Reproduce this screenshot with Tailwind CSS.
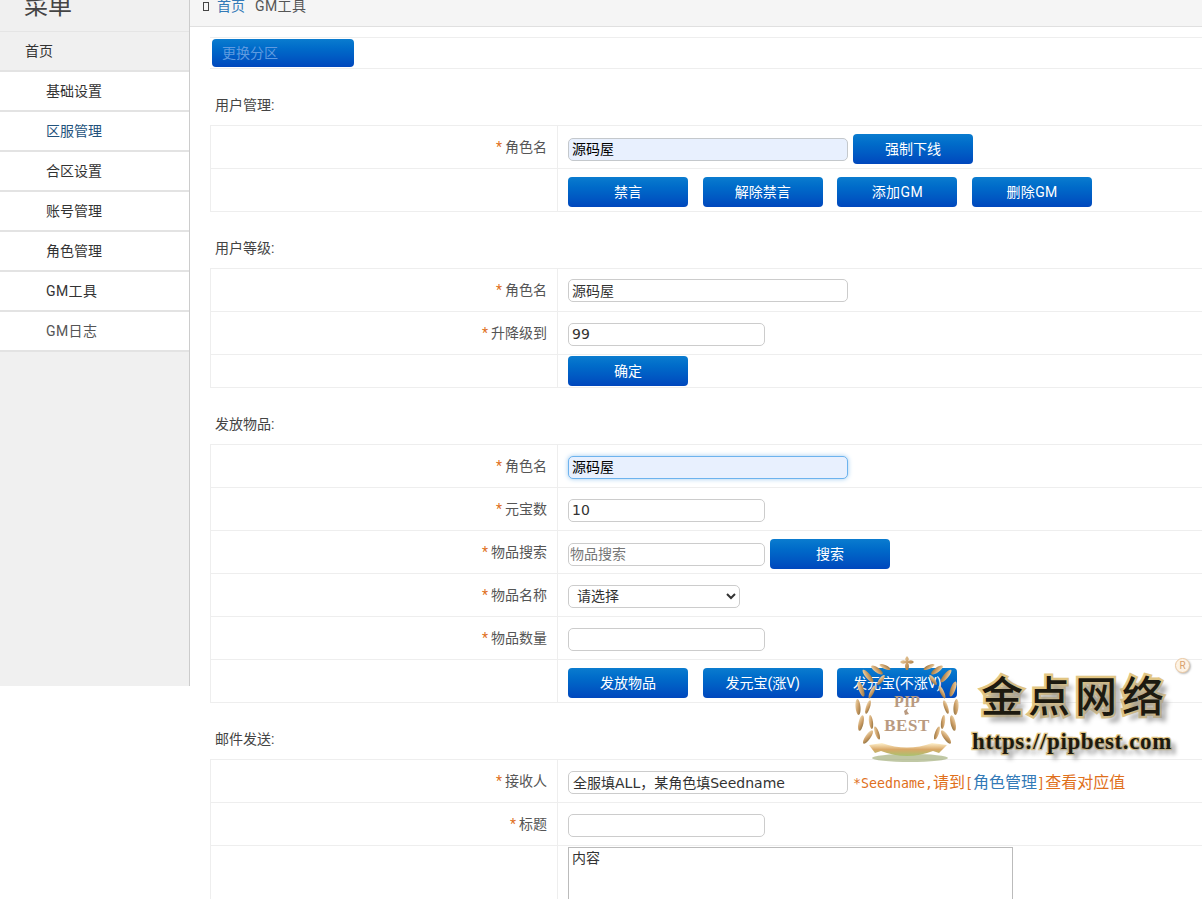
<!DOCTYPE html>
<html lang="zh-CN">
<head>
<meta charset="UTF-8">
<title>GM工具</title>
<script src="https://cdn.jsdelivr.net/npm/@tailwindcss/browser@4"></script>
</head>
<body class="relative h-[899px] overflow-hidden bg-white text-[14px] text-[#333] font-['Roboto','Noto_Sans_CJK_SC',sans-serif]">
<div class="flex items-start">
  <!-- sidebar -->
  <aside class="w-[190px] h-[686px] shrink-0 bg-[#f0f0f0] border-r border-[#ccc]">
    <div class="h-[32px] overflow-hidden border-b border-[#e5e5e5] pl-[24px]">
      <div class="-mt-[11px] text-[24px] leading-[34px] text-[#444]">菜单</div>
    </div>
    <a class="flex items-center h-[40px] pl-[25px] border-b-2 border-[#e3e3e3] text-[#333]">首页</a>
    <a class="flex items-center h-[40px] pl-[46px] bg-white border-b-2 border-[#e3e3e3] text-[#333]">基础设置</a>
    <a class="flex items-center h-[40px] pl-[46px] bg-white border-b-2 border-[#e3e3e3] text-[#23527c]">区服管理</a>
    <a class="flex items-center h-[40px] pl-[46px] bg-white border-b-2 border-[#e3e3e3] text-[#333]">合区设置</a>
    <a class="flex items-center h-[40px] pl-[46px] bg-white border-b-2 border-[#e3e3e3] text-[#333]">账号管理</a>
    <a class="flex items-center h-[40px] pl-[46px] bg-white border-b-2 border-[#e3e3e3] text-[#333]">角色管理</a>
    <a class="flex items-center h-[40px] pl-[46px] bg-white border-b-2 border-[#e3e3e3] text-[#333] tracking-[0.4px]">GM工具</a>
    <a class="flex items-center h-[40px] pl-[46px] bg-white border-b-2 border-[#e3e3e3] text-[#555] tracking-[0.4px]">GM日志</a>
  </aside>

  <!-- main -->
  <main class="flex-1 min-w-0">
    <div class="h-[27px] overflow-hidden bg-[#f5f5f5] border-b border-[#e0e0e0] flex items-start pl-[13px] text-[#555]">
      <span class="mt-[2px] w-[6px] h-[9px] border border-[#444]"></span>
      <a class="ml-[8px] -mt-[4px] leading-[20px] text-[#337ab7]">首页</a>
      <span class="ml-[10px] -mt-[4px] leading-[20px] tracking-[0.4px]">GM工具</span>
    </div>

    <div class="pl-[20px]">
      <div class="mt-[10px] h-[32px] border-y border-[#eee] flex items-center pl-[2px]">
        <button class="w-[142px] h-[28px] pl-[10px] text-left rounded-[4px] bg-gradient-to-b from-[#0b7ccf] to-[#0047bd] text-[#5f9be0]">更换分区</button>
      </div>

      <!-- 用户管理 -->
      <h3 class="h-[56px] pt-[26px] pl-[5px] leading-[20px] font-normal text-[#444]">用户管理:</h3>
      <div class="border-l border-t border-[#eee]">
        <div class="grid grid-cols-[347px_1fr] h-[43px] border-b border-[#eee]">
          <div class="border-r border-[#eee] flex items-center justify-end pr-[10px] text-[#555]"><span class="text-[#e0701c] mr-[3px]">*</span>角色名</div>
          <div class="flex items-center gap-[5px] pl-[10px] pt-[4px]">
            <input value="源码屋" class="w-[280px] h-[23px] px-[3px] pb-[2px] rounded-[5px] border border-[#c4c8cc] bg-[#e8f0fe] text-black font-['DejaVu_Sans','Noto_Sans_CJK_SC',sans-serif]">
            <button class="w-[120px] h-[30px] rounded-[4px] bg-gradient-to-b from-[#0b7ccf] to-[#0047bd] text-white">强制下线</button>
          </div>
        </div>
        <div class="grid grid-cols-[347px_1fr] h-[43px] border-b border-[#eee]">
          <div class="border-r border-[#eee]"></div>
          <div class="flex items-center gap-[14.7px] pl-[10px] pt-[4px]">
            <button class="w-[120px] h-[30px] rounded-[4px] bg-gradient-to-b from-[#0b7ccf] to-[#0047bd] text-white">禁言</button>
            <button class="w-[120px] h-[30px] rounded-[4px] bg-gradient-to-b from-[#0b7ccf] to-[#0047bd] text-white">解除禁言</button>
            <button class="w-[120px] h-[30px] rounded-[4px] bg-gradient-to-b from-[#0b7ccf] to-[#0047bd] text-white tracking-[0.4px]">添加GM</button>
            <button class="w-[120px] h-[30px] rounded-[4px] bg-gradient-to-b from-[#0b7ccf] to-[#0047bd] text-white tracking-[0.4px]">删除GM</button>
          </div>
        </div>
      </div>

      <!-- 用户等级 -->
      <h3 class="h-[56px] pt-[26px] pl-[5px] leading-[20px] font-normal text-[#444]">用户等级:</h3>
      <div class="border-l border-t border-[#eee]">
        <div class="grid grid-cols-[347px_1fr] h-[43px] border-b border-[#eee]">
          <div class="border-r border-[#eee] flex items-center justify-end pr-[10px] text-[#555]"><span class="text-[#e0701c] mr-[3px]">*</span>角色名</div>
          <div class="flex items-center pl-[10px] pt-[1px]">
            <input value="源码屋" class="w-[280px] h-[23px] px-[3px] pb-[2px] rounded-[5px] border border-[#ccc] text-[#333] font-['DejaVu_Sans','Noto_Sans_CJK_SC',sans-serif]">
          </div>
        </div>
        <div class="grid grid-cols-[347px_1fr] h-[43px] border-b border-[#eee]">
          <div class="border-r border-[#eee] flex items-center justify-end pr-[10px] text-[#555]"><span class="text-[#e0701c] mr-[3px]">*</span>升降级到</div>
          <div class="flex items-center pl-[10px] pt-[2px]">
            <input value="99" class="w-[197px] h-[23px] px-[3px] rounded-[5px] border border-[#ccc] text-[#333] font-['DejaVu_Sans','Noto_Sans_CJK_SC',sans-serif]">
          </div>
        </div>
        <div class="grid grid-cols-[347px_1fr] h-[33px] border-b border-[#eee]">
          <div class="border-r border-[#eee]"></div>
          <div class="flex items-center pl-[10px]">
            <button class="w-[120px] h-[30px] rounded-[4px] bg-gradient-to-b from-[#0b7ccf] to-[#0047bd] text-white">确定</button>
          </div>
        </div>
      </div>

      <!-- 发放物品 -->
      <h3 class="h-[56px] pt-[26px] pl-[5px] leading-[20px] font-normal text-[#444]">发放物品:</h3>
      <div class="border-l border-t border-[#eee]">
        <div class="grid grid-cols-[347px_1fr] h-[43px] border-b border-[#eee]">
          <div class="border-r border-[#eee] flex items-center justify-end pr-[10px] text-[#555]"><span class="text-[#e0701c] mr-[3px]">*</span>角色名</div>
          <div class="flex items-center pl-[10px] pt-[2px]">
            <input value="源码屋" class="w-[280px] h-[23px] px-[3px] pb-[2px] rounded-[5px] border border-[#6db3ee] bg-[#e8f0fe] text-black shadow-[0_0_5px_#9ecaef] font-['DejaVu_Sans','Noto_Sans_CJK_SC',sans-serif]">
          </div>
        </div>
        <div class="grid grid-cols-[347px_1fr] h-[43px] border-b border-[#eee]">
          <div class="border-r border-[#eee] flex items-center justify-end pr-[10px] text-[#555]"><span class="text-[#e0701c] mr-[3px]">*</span>元宝数</div>
          <div class="flex items-center pl-[10px] pt-[2px]">
            <input value="10" class="w-[197px] h-[23px] px-[3px] rounded-[5px] border border-[#ccc] text-[#333] font-['DejaVu_Sans','Noto_Sans_CJK_SC',sans-serif]">
          </div>
        </div>
        <div class="grid grid-cols-[347px_1fr] h-[43px] border-b border-[#eee]">
          <div class="border-r border-[#eee] flex items-center justify-end pr-[10px] text-[#555]"><span class="text-[#e0701c] mr-[3px]">*</span>物品搜索</div>
          <div class="flex items-center gap-[5px] pl-[10px] pt-[4px]">
            <input placeholder="物品搜索" class="w-[197px] h-[23px] px-[1px] rounded-[5px] border border-[#ccc] placeholder:text-[#777] font-['DejaVu_Sans','Noto_Sans_CJK_SC',sans-serif]">
            <button class="w-[120px] h-[30px] rounded-[4px] bg-gradient-to-b from-[#0b7ccf] to-[#0047bd] text-white">搜索</button>
          </div>
        </div>
        <div class="grid grid-cols-[347px_1fr] h-[43px] border-b border-[#eee]">
          <div class="border-r border-[#eee] flex items-center justify-end pr-[10px] text-[#555]"><span class="text-[#e0701c] mr-[3px]">*</span>物品名称</div>
          <div class="flex items-center pl-[10px] pt-[2px]">
            <select class="w-[172px] h-[23px] pl-[4px] rounded-[5px] border border-[#ccc] bg-white text-[#333] appearance-auto">
              <option>请选择</option>
            </select>
          </div>
        </div>
        <div class="grid grid-cols-[347px_1fr] h-[43px] border-b border-[#eee]">
          <div class="border-r border-[#eee] flex items-center justify-end pr-[10px] text-[#555]"><span class="text-[#e0701c] mr-[3px]">*</span>物品数量</div>
          <div class="flex items-center pl-[10px] pt-[2px]">
            <input class="w-[197px] h-[23px] px-[3px] rounded-[5px] border border-[#ccc]">
          </div>
        </div>
        <div class="grid grid-cols-[347px_1fr] h-[43px] border-b border-[#eee]">
          <div class="border-r border-[#eee]"></div>
          <div class="flex items-center gap-[14.7px] pl-[10px] pt-[4px]">
            <button class="w-[120px] h-[30px] rounded-[4px] bg-gradient-to-b from-[#0b7ccf] to-[#0047bd] text-white">发放物品</button>
            <button class="w-[120px] h-[30px] rounded-[4px] bg-gradient-to-b from-[#0b7ccf] to-[#0047bd] text-white">发元宝(涨V)</button>
            <button class="w-[120px] h-[30px] rounded-[4px] bg-gradient-to-b from-[#0b7ccf] to-[#0047bd] text-white">发元宝(不涨V)</button>
          </div>
        </div>
      </div>

      <!-- 邮件发送 -->
      <h3 class="h-[56px] pt-[26px] pl-[5px] leading-[20px] font-normal text-[#444]">邮件发送:</h3>
      <div class="border-l border-t border-[#eee]">
        <div class="grid grid-cols-[347px_1fr] h-[43px] border-b border-[#eee]">
          <div class="border-r border-[#eee] flex items-center justify-end pr-[10px] text-[#555]"><span class="text-[#e0701c] mr-[3px]">*</span>接收人</div>
          <div class="flex items-center gap-[5px] pl-[10px] pt-[3px]">
            <input value="全服填ALL，某角色填Seedname" class="w-[280px] h-[23px] px-[4px] pb-[2px] rounded-[5px] border border-[#ccc] text-[#333] font-['DejaVu_Sans','Noto_Sans_CJK_SC',sans-serif]">
            <span class="text-[16px] text-[#e0701c] whitespace-nowrap"><span class="font-['DejaVu_Sans_Mono'] text-[13.3px]">*Seedname,</span>请到<span class="font-['DejaVu_Sans_Mono'] text-[13.3px]">[</span><a class="text-[#337ab7]">角色管理</a><span class="font-['DejaVu_Sans_Mono'] text-[13.3px]">]</span>查看对应值</span>
          </div>
        </div>
        <div class="grid grid-cols-[347px_1fr] h-[43px] border-b border-[#eee]">
          <div class="border-r border-[#eee] flex items-center justify-end pr-[10px] text-[#555]"><span class="text-[#e0701c] mr-[3px]">*</span>标题</div>
          <div class="flex items-center pl-[10px] pt-[2px]">
            <input class="w-[197px] h-[23px] px-[3px] rounded-[5px] border border-[#ccc]">
          </div>
        </div>
        <div class="grid grid-cols-[347px_1fr] h-[120px]">
          <div class="border-r border-[#eee]"></div>
          <div class="pl-[10px] pt-[1px]">
            <textarea class="block w-[445px] h-[100px] px-[3px] py-0 border border-[#bbb] text-[#333] resize-none">内容</textarea>
          </div>
        </div>
      </div>
    </div>
  </main>
</div>

<!-- watermark -->
<div class="absolute left-[853px] top-[655px] w-[340px] h-[115px] pointer-events-none">
  <svg class="absolute left-[2px] top-0 w-[104px] h-[110px]" viewBox="0 0 104 110">
    <defs>
      <linearGradient id="leaf" x1="0" y1="0" x2="1" y2="1">
        <stop offset="0" stop-color="#f6e3bb"/>
        <stop offset="0.55" stop-color="#c99a62"/>
        <stop offset="1" stop-color="#7f6a3c"/>
      </linearGradient>
      <linearGradient id="ribbon" x1="0" y1="0" x2="0" y2="1">
        <stop offset="0" stop-color="#fff3cf"/>
        <stop offset="0.5" stop-color="#d9a868"/>
        <stop offset="1" stop-color="#a9c26f"/>
      </linearGradient>
      <g id="branch" fill="url(#leaf)">
        <ellipse cx="30" cy="12" rx="2" ry="6" transform="rotate(-65 30 12)"/>
        <ellipse cx="22" cy="15" rx="2.5" ry="7" transform="rotate(-55 22 15)"/>
        <ellipse cx="13" cy="21" rx="2.5" ry="8" transform="rotate(-40 13 21)"/>
        <ellipse cx="26" cy="25" rx="2" ry="6" transform="rotate(35 26 25)"/>
        <ellipse cx="6" cy="34" rx="2.5" ry="8" transform="rotate(-20 6 34)"/>
        <ellipse cx="17" cy="37" rx="2" ry="7" transform="rotate(25 17 37)"/>
        <ellipse cx="3" cy="52" rx="2.5" ry="8" transform="rotate(-5 3 52)"/>
        <ellipse cx="13" cy="52" rx="2" ry="7" transform="rotate(18 13 52)"/>
        <ellipse cx="6" cy="68" rx="2.5" ry="8" transform="rotate(12 6 68)"/>
        <ellipse cx="16" cy="67" rx="2" ry="7" transform="rotate(-8 16 67)"/>
        <ellipse cx="13" cy="82" rx="2.5" ry="8" transform="rotate(35 13 82)"/>
        <ellipse cx="22" cy="78" rx="2" ry="7" transform="rotate(-20 22 78)"/>
      </g>
    </defs>
    <ellipse cx="55" cy="103" rx="38" ry="4" fill="#8d9a5b" opacity="0.55"/>
    <use href="#branch"/>
    <use href="#branch" transform="translate(104 0) scale(-1 1)"/>
    <path d="M52 1 q3 3 1 5 q4 -2 6 1 q-2 3 -6 1 q2 3 0 7 l-2 0 q-2 -4 0 -7 q-4 2 -6 -1 q2 -3 6 -1 q-2 -2 1 -5 z" fill="url(#leaf)"/>
    <path d="M49 56 l4 -3 -1 3 2 3 -4 1 z" fill="#b99a80"/>
    <path d="M14 90 L27 88 Q52 97 77 88 L92 90 L84 98 L78 96 Q52 106 26 96 L20 98 Z" fill="url(#ribbon)"/>
  </svg>
  <span class="absolute left-[34px] top-[38px] w-[40px] text-center font-['Liberation_Serif',serif] font-bold text-[16px] leading-[18px] text-[#b99a80]">PIP</span>
  <span class="absolute left-[24px] top-[62px] w-[60px] text-center font-['Liberation_Serif',serif] font-bold text-[17px] leading-[18px] tracking-[0.5px] text-[#b99a80]">BEST</span>
  <span class="absolute left-[128px] top-[15px] whitespace-nowrap font-medium text-[42px] leading-[56px] tracking-[5px] text-[#1d1a10] [paint-order:stroke_fill] [-webkit-text-stroke:5px_#e2c684] [text-shadow:6px_6px_5px_#999]">金点网络</span>
  <span class="absolute left-[119px] top-[75px] whitespace-nowrap font-['Liberation_Serif',serif] font-bold text-[23px] leading-[24px] tracking-[0.6px] text-[#1d1a10] [paint-order:stroke_fill] [-webkit-text-stroke:2.5px_#e2c684] [text-shadow:5px_5px_4px_#999]">https://pipbest.com</span>
  <span class="absolute left-[322px] top-[3px] w-[15px] h-[15px] rounded-full border border-[#ecc9a2] bg-[#fdf3e6] flex items-center justify-center text-[10px] text-[#d9a06c] shadow-[1px_1px_2px_#bbb]">R</span>
</div>
</body>
</html>
